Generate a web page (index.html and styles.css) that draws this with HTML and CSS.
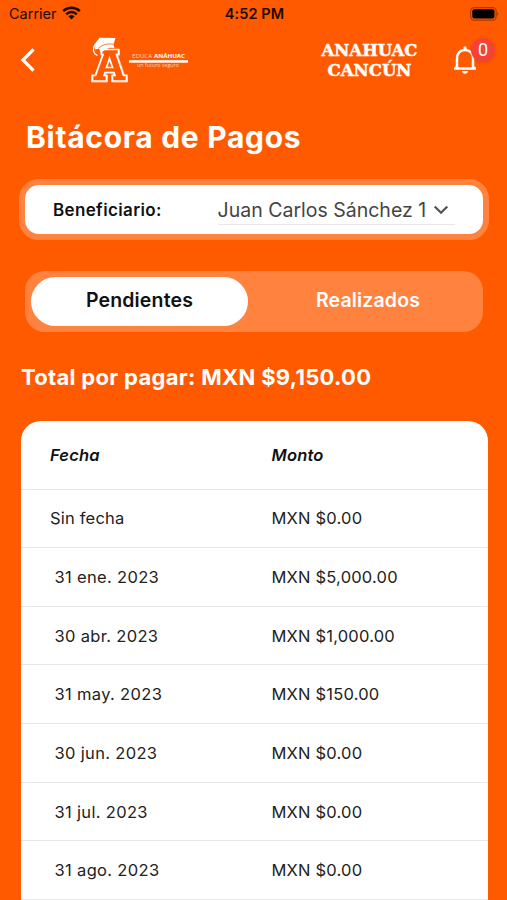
FILE: index.html
```
<!DOCTYPE html>
<html lang="es">
<head>
<meta charset="utf-8">
<meta name="viewport" content="width=device-width, initial-scale=1">
<title>Bitácora de Pagos</title>
<link rel="stylesheet" href="styles.css">
</head>
<body>
<div class="screen">
  <div class="status">
    <div class="carrier"><span>Carrier</span>
      <svg class="wifi" width="19" height="14" viewBox="0 0 19 14"><g fill="none" stroke="#1c0b00" stroke-width="2.5"><path d="M1.2 5.1a11.8 11.8 0 0 1 16.6 0"/><path d="M4.2 8.3a7.5 7.5 0 0 1 10.6 0"/></g><path d="M6.5 10.5a4.3 4.3 0 0 1 6 0l-3 3.1z" fill="#1c0b00"/></svg>
    </div>
    <span class="clock">4:52 PM</span>
    <svg class="battery" width="30" height="14" viewBox="0 0 30 14"><rect x=".6" y=".6" width="25.6" height="12.6" rx="3.6" fill="none" stroke="#a63b02" stroke-width="1.2"/><rect x="2.3" y="2.3" width="22.2" height="9.2" rx="2" fill="#000"/><path d="M27.3 4.6q2.2 2.3 0 4.6z" fill="#a63b02"/></svg>
  </div>

  <header class="header">
    <svg class="back" width="18" height="26" viewBox="0 0 18 26"><path d="M15.500 2.300 5 13l10.500 10.700" fill="none" stroke="#fff" stroke-width="3.3"/></svg>
    <svg class="logo" width="100" height="48" viewBox="0 0 100 48">
      <path d="M11.5 13.500H28.500V18.500H26.500L33.500 39.500H36.500V45H22.500V39.500H25L24 36.500H15L14 39.500H16.500V45H2.500V39.500H5.500L13 18.500H11.500ZM19.500 22.500 16.500 31.500H22.500Z" fill="#ff5a00" stroke="#fff" stroke-width="1.700"/>
      <path d="M11 13.500H29.500V19H27.500L34.500 39H37.500V46H21.500V39H24L23 37H16L15 39H17.500V46H1.500V39H5L12.500 19H11Z" fill="none" stroke="#fff" stroke-width=".6"/>
      <path d="M3.800 9.200 9.500 1.700 25.500 2 23.500 8.500 24.500 12.200Q18 10.500 11 17L9 12.500 5.500 13.500 7.500 19Z" fill="#fff"/>
      <path d="M8.500 12Q15.500 6.500 23.500 8.300" fill="none" stroke="#ff5a00" stroke-width=".8"/>
      <path d="M4 10 3.400 14.500 5 18 7.500 19.500" fill="none" stroke="#fff" stroke-width="1.300"/>
      <text class="brand" x="42" y="22.300" textLength="20" lengthAdjust="spacingAndGlyphs">EDUCA</text>
      <text class="brand brand-bold" x="64" y="22.300" textLength="31" lengthAdjust="spacingAndGlyphs">ANÁHUAC</text>
      <rect x="39" y="24.200" width="59" height="2.500" fill="#fff"/>
      <text class="brand motto" x="47" y="30.800" textLength="42" lengthAdjust="spacingAndGlyphs">un futuro seguro</text>
    </svg>
    <svg class="campus" width="110" height="46" viewBox="0 0 110 46">
      <text x="5.500" y="19.900" textLength="96" lengthAdjust="spacingAndGlyphs">ANAHUAC</text>
      <text x="11.500" y="39.900" textLength="84" lengthAdjust="spacingAndGlyphs">CANCÚN</text>
    </svg>
    <div class="bell">
      <svg width="26" height="30" viewBox="0 0 26 30"><path d="M2 24.500H24M5 24V15C5 9.500 8 6 13 6S21 9.500 21 15V24" fill="none" stroke="#fff" stroke-width="2.500"/><path d="M11.300 6V4a1.700 1.700 0 0 1 3.400 0V6ZM2 24.500 5.500 20V24ZM24 24.500 20.500 20V24ZM10 27h6q-.4 2.800-3 2.800t-3-2.800Z" fill="#fff"/></svg>
      <span class="badge">0</span>
    </div>
  </header>

  <h1>Bitácora de Pagos</h1>

  <div class="beneficiary">
    <label>Beneficiario:</label>
    <div class="select"><span>Juan Carlos Sánchez 1</span>
      <svg width="16" height="10" viewBox="0 0 16 10"><path d="M1.700 1.500 8 7.700l6.300-6.200" fill="none" stroke="#555" stroke-width="2.300"/></svg>
    </div>
  </div>

  <div class="tabs"><div class="tab active"><span>Pendientes</span></div><div class="tab"><span>Realizados</span></div></div>

  <p class="total">Total por pagar: MXN $9,150.00</p>

  <div class="table">
    <div class="row head"><span>Fecha</span><span>Monto</span></div>
    <div class="row"><span>Sin fecha</span><span>MXN $0.00</span></div>
    <div class="row dated"><span>31 ene. 2023</span><span>MXN $5,000.00</span></div>
    <div class="row dated"><span>30 abr. 2023</span><span>MXN $1,000.00</span></div>
    <div class="row dated"><span>31 may. 2023</span><span>MXN $150.00</span></div>
    <div class="row dated"><span>30 jun. 2023</span><span>MXN $0.00</span></div>
    <div class="row dated"><span>31 jul. 2023</span><span>MXN $0.00</span></div>
    <div class="row dated"><span>31 ago. 2023</span><span>MXN $0.00</span></div>
  </div>
</div>
</body>
</html>
```
FILE: styles.css
```
* { box-sizing: border-box; }
body { margin: 0; background: #ff5a00; font-family: Inter, "Liberation Sans", sans-serif; color: #222; }
.screen { height: 900px; overflow: hidden; display: flex; flex-direction: column; }
.screen > * { flex-shrink: 0; }
.status { height: 28px; display: grid; grid-template-columns: 1fr auto 1fr; align-items: center; padding: 0 7px 0 9px; color: #1c0b00; font-size: 14.500px; }
.carrier { display: flex; align-items: center; gap: 5px; position: relative; top: -1px; }
.clock { font-weight: 600; letter-spacing: .1px; margin-top: -2px; }
.battery { justify-self: end; margin-top: -1px; }
.header { height: 67px; display: flex; align-items: flex-start; padding: 8px 11px 0 18px; }
.header > * { flex-shrink: 0; }
.back { margin-top: 11px; }
.logo { margin-left: 54px; }
.brand { font: 6px "Open Sans", sans-serif; fill: #ffd0b3; }
.brand-bold { font-weight: 700; fill: #fff; }
.motto { font-size: 5px; }
.campus { margin-left: 126px; font: bold 17.500px "DejaVu Serif", serif; fill: #fff; stroke: #fff; stroke-width: .5px; }
.bell { position: relative; margin: 8px 0 0 26px; }
.bell > svg { display: block; }
.badge { position: absolute; left: 19px; top: -6px; width: 24px; height: 24px; border-radius: 50%; background: #f44336; color: #fff; font: 18px/23px Roboto, sans-serif; text-align: center; box-shadow: 0 1px 3px #b5300055; }
h1 { margin: 24px 0 0 26px; font-size: 30px; line-height: 36px; font-weight: 700; letter-spacing: .7px; color: #fff; white-space: nowrap; }
.beneficiary { margin: 24px 18px 0 19px; height: 61px; border: 6px solid #ff833f; border-radius: 20px; background: #fff; display: flex; align-items: center; padding: 0 28px; }
.beneficiary label { width: 165px; font-size: 17px; font-weight: 600; letter-spacing: .35px; color: #111; }
.select { width: 238px; height: 30px; margin-top: 1px; padding-top: 1px; border-bottom: 1px solid #e8e8e8; display: flex; align-items: center; gap: 7px; font-size: 19.500px; color: #444; white-space: nowrap; }
.tabs { margin: 31px 24px 0 25px; height: 61px; border-radius: 20px; background: #ff833f; padding: 6px; display: flex; }
.tab { flex: 1; display: flex; align-items: center; justify-content: center; padding-bottom: 3px; font-size: 19.500px; font-weight: 600; letter-spacing: .15px; color: #fff; }
.tab:last-child { padding-left: 11px; }
.tab.active { flex: 0 0 217px; border-radius: 25px; background: #fff; color: #111; }
.total { margin: 30px 0 0 21px; font-size: 22px; line-height: 30px; font-weight: 700; letter-spacing: .3px; color: #fff; white-space: nowrap; }
.table { margin: 29px 19px 0 20.500px; background: #fff; border-radius: 20px 20px 0 0; font-size: 16.500px; letter-spacing: .2px; }
.row { height: 58.650px; border-bottom: 1.500px solid #e7e7e7; display: grid; grid-template-columns: 221.500px 1fr; align-items: center; padding-left: 29.500px; }
.row.head { height: 68.500px; font-weight: 600; font-style: italic; color: #111; }
.dated > :first-child { padding-left: 4.500px; letter-spacing: .33px; }
```
